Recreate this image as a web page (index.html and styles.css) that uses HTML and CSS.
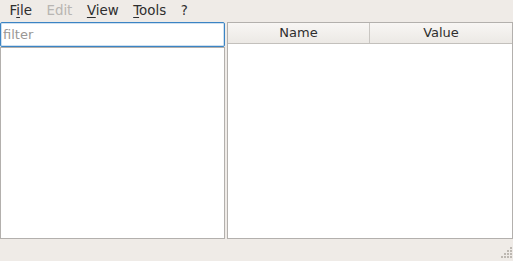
FILE: index.html
```html
<!DOCTYPE html>
<html lang="en">
<head>
    <meta charset="UTF-8">
    <title>Properties</title>
    <link rel="stylesheet" href="styles.css">
</head>
<body>
<div class="window">
    <!-- Menu bar -->
    <div class="menubar">
        <span class="menu-item">F<u>i</u>le</span>
        <span class="menu-item disabled">Edit</span>
        <span class="menu-item"><u>V</u>iew</span>
        <span class="menu-item"><u>T</u>ools</span>
        <span class="menu-item">?</span>
    </div>

    <div class="main">
        <!-- Left side: filter + list -->
        <div class="left-pane">
            <input class="filter" type="text" placeholder="filter">
            <div class="list"></div>
        </div>

        <!-- Right side: table -->
        <div class="table">
            <div class="table-header">
                <div class="col col-name">Name</div>
                <div class="col col-value">Value</div>
            </div>
            <div class="table-body"></div>
        </div>
    </div>

    <!-- Status bar with size grip -->
    <div class="statusbar">
        <svg class="grip" viewBox="0 0 12 12">
            <rect x="10" y="1" width="2" height="2"></rect>
            <rect x="7" y="4" width="2" height="2"></rect>
            <rect x="10" y="4" width="2" height="2"></rect>
            <rect x="4" y="7" width="2" height="2"></rect>
            <rect x="7" y="7" width="2" height="2"></rect>
            <rect x="10" y="7" width="2" height="2"></rect>
            <rect x="1" y="10" width="2" height="2"></rect>
            <rect x="4" y="10" width="2" height="2"></rect>
            <rect x="7" y="10" width="2" height="2"></rect>
            <rect x="10" y="10" width="2" height="2"></rect>
        </svg>
    </div>
</div>
</body>
</html>
```

FILE: styles.css
```css
* {
    box-sizing: border-box;
    margin: 0;
    padding: 0;
    font-family: "DejaVu Sans", sans-serif;
}

body {
    background-color: #efebe7;
    font-size: 13px;
    color: #2e2e2e;
}

.window {
    display: flex;
    flex-direction: column;
    width: 513px;
    height: 261px;
}

.menubar {
    display: flex;
    height: 22px;
    align-items: center;
    padding-left: 2px;
}

.menu-item {
    padding: 0 7px 0 7.5px;
    line-height: 22px;
    font-size: 13.4px;
}

.menu-item u {
    text-decoration-thickness: 1px;
    text-underline-offset: 2px;
}

.menu-item.disabled {
    color: #b8b5b2;
}

.main {
    display: flex;
    gap: 2px;
    height: 217px;
}

.left-pane {
    display: flex;
    flex-direction: column;
    width: 225px;
}

.filter {
    height: 25px;
    width: 100%;
    border: 1px solid #3b84c4;
    border-radius: 2px;
    background-color: white;
    padding: 0 2px;
    font-size: 13px;
    color: #2e2e2e;
    outline: none;
    box-shadow: inset 0 0 0 1px rgba(59, 132, 196, 0.25);
}

.filter::placeholder {
    color: #9a9795;
}

.list {
    flex-grow: 1;
    background-color: white;
    border: 1px solid #b3b0ad;
}

.table {
    display: flex;
    flex-direction: column;
    flex-grow: 1;
    border: 1px solid #b3b0ad;
    background-color: white;
}

.table-header {
    display: flex;
    height: 21px;
    background: linear-gradient(#f8f6f4, #ece9e5);
    border-bottom: 1px solid #c3c0bc;
}

.col {
    display: flex;
    align-items: center;
    justify-content: center;
    line-height: 20px;
}

.col-name {
    width: 142px;
    border-right: 1px solid #c9c6c2;
}

.col-value {
    flex-grow: 1;
}

.table-body {
    flex-grow: 1;
}

.statusbar {
    display: flex;
    justify-content: flex-end;
    align-items: flex-end;
    flex-grow: 1;
    padding: 0 1px 3px 0;
}

.grip {
    width: 12px;
    height: 12px;
    fill: #bdb8b2;
}
```
